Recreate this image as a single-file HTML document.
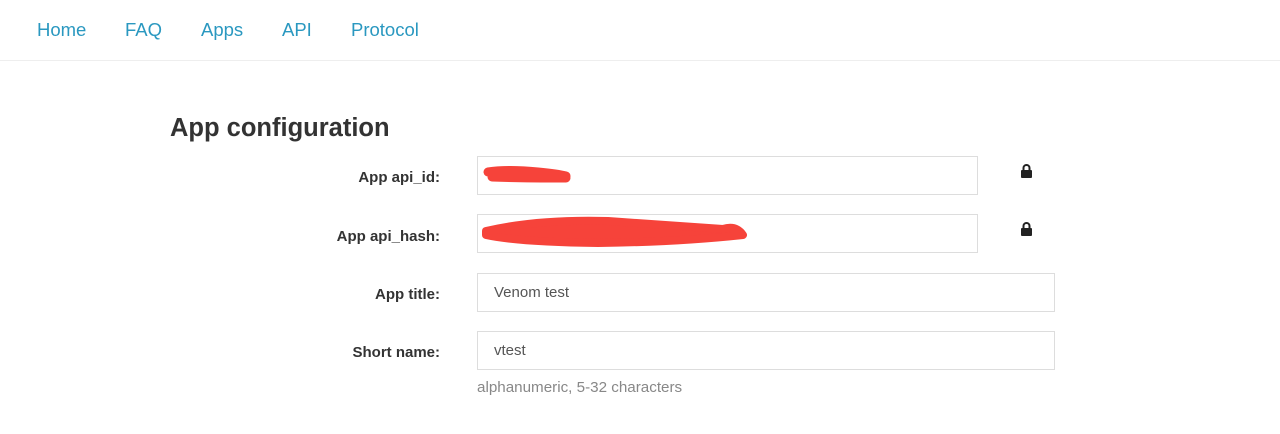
<!DOCTYPE html>
<html><head><meta charset="utf-8"><style>
body{margin:0;width:1280px;height:434px;background:#fff;font-family:"Liberation Sans",sans-serif;position:relative;overflow:hidden}
.nav{position:absolute;left:0;top:0;width:1280px;height:60px;border-bottom:1px solid #eee}
.nav a{position:absolute;top:19px;font-size:18.5px;color:#2a98c0;text-decoration:none}
h1{position:absolute;left:170px;top:114px;margin:0;font-size:25.5px;font-weight:bold;color:#333}
.lbl{position:absolute;right:840px;font-size:15px;font-weight:bold;color:#333}
.in{position:absolute;left:477px;border:1px solid #ddd;box-sizing:border-box;height:39px;font-size:15px;color:#555;padding:10px 0 0 16px}
.lock{position:absolute;left:1020px}
.hint{position:absolute;left:477px;top:379px;font-size:15.2px;color:#888}
</style></head><body>
<div class="nav">
<a style="left:37px">Home</a><a style="left:125px">FAQ</a><a style="left:201px">Apps</a><a style="left:282px">API</a><a style="left:351px">Protocol</a>
</div>
<h1>App configuration</h1>
<div class="lbl" style="top:169px">App api_id:</div>
<div class="lbl" style="top:228px">App api_hash:</div>
<div class="lbl" style="top:286px">App title:</div>
<div class="lbl" style="top:344px">Short name:</div>
<div class="in" style="top:156px;width:501px"><svg style="position:absolute;left:0;top:0" width="500" height="39"><path d="M10 15 Q30 12 60 15 Q80 17 88 19 M14 20 Q40 21 88 21" fill="none" stroke="#f6433a" stroke-width="9" stroke-linecap="round"/></svg></div>
<div class="in" style="top:214px;width:501px"><svg style="position:absolute;left:0;top:0" width="500" height="39"><path d="M8 16 Q60 4 130 6 Q200 11 245 14 Q258 10 265 20 Q200 27 120 28 Q40 27 8 20Z" fill="#f6433a" stroke="#f6433a" stroke-width="8" stroke-linejoin="round"/></svg></div>
<div class="in" style="top:273px;width:578px">Venom test</div>
<div class="in" style="top:331px;width:578px">vtest</div>
<div class="hint">alphanumeric, 5-32 characters</div>
<svg class="lock" style="top:163px" width="13" height="16" viewBox="0 0 13 16"><path d="M3.5 7V5a3 3 0 0 1 6 0v2" fill="none" stroke="#222" stroke-width="2"/><rect x="1" y="7" width="11" height="8" rx="1" fill="#222"/></svg>
<svg class="lock" style="top:221px" width="13" height="16" viewBox="0 0 13 16"><path d="M3.5 7V5a3 3 0 0 1 6 0v2" fill="none" stroke="#222" stroke-width="2"/><rect x="1" y="7" width="11" height="8" rx="1" fill="#222"/></svg>
</body></html>
